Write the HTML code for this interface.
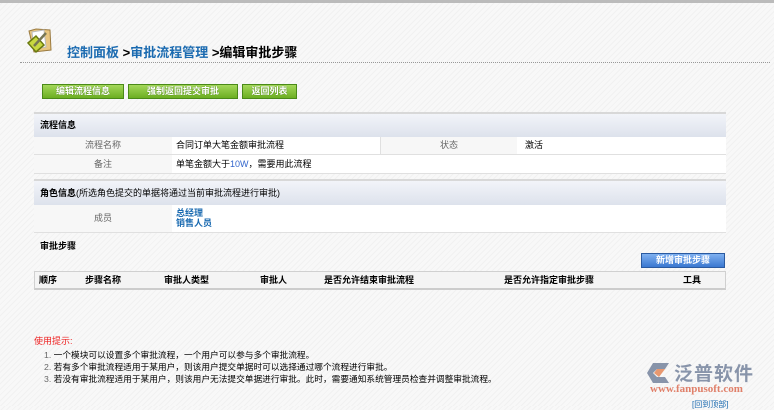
<!DOCTYPE html>
<html><head><meta charset="utf-8"><style>
*{margin:0;padding:0;box-sizing:border-box}
body{width:774px;height:406px;overflow:hidden;background:#f6f6f6 repeating-linear-gradient(135deg,#f8f8f8 0 3px,#f1f1f1 3px 4px);font-family:"Liberation Sans","Noto Sans CJK SC",sans-serif;font-size:9px;color:#000;position:relative}
.a{position:absolute}
.btn{position:absolute;top:84px;height:15px;background:linear-gradient(#a4d85a,#6cae22);border:1px solid #4a8a18;color:#fff;font-weight:bold;font-size:9px;text-align:center;line-height:13px;text-shadow:0 0 1px #3a6a10}
.hd{position:absolute;left:34px;width:692px;background:linear-gradient(#f2f4f9,#dde2ec);border-top:2px solid #d8d8d8;font-weight:bold;font-size:9px;padding-left:6px}
.row{position:absolute;left:34px;width:692px;border-bottom:1px solid #e0e0e0;background:#f7f7f7}
.c{position:absolute;top:0;height:100%}
</style></head><body>
<div class="a" style="left:0;top:0;width:774px;height:3px;background:#bbb"></div>
<svg class="a" style="left:24px;top:25px" width="30" height="30" viewBox="0 0 30 30">
<path d="M5 6 L12 4 L26 5 L27 25 L10 27 Z" fill="#e8c680" stroke="#9a7a40"/>
<path d="M8 7 L20 5 L22 22 L10 24Z" fill="#fff" stroke="#bbb"/>
<path d="M4 18 L12 11 L20 20 L12 27Z" fill="#c8d840" stroke="#6a7a10" stroke-width="1.5"/>
<path d="M10 21 L22 8" stroke="#775" stroke-width="2.5"/>
</svg>
<div class="a" style="left:67px;top:42px;font-size:13px;font-weight:bold;color:#1a6ab0;white-space:nowrap">控制面板 <span style="color:#000">&gt;</span>审批流程管理 <span style="color:#000">&gt;编辑审批步骤</span></div>
<div class="a" style="left:20px;top:62px;width:750px;border-top:1px dotted #999"></div>
<div class="btn" style="left:42px;width:82px">编辑流程信息</div>
<div class="btn" style="left:128px;width:110px">强制返回提交审批</div>
<div class="btn" style="left:242px;width:55px">返回列表</div>

<div class="hd" style="top:112px;height:25px;line-height:23px">流程信息</div>
<div class="row" style="top:137px;height:18px;line-height:17px">
<div class="c" style="left:0;width:138px;text-align:center;color:#666">流程名称</div>
<div class="c" style="left:138px;width:209px;background:#fff;padding-left:4px;border-right:1px solid #e0e0e0">合同订单大笔金额审批流程</div>
<div class="c" style="left:347px;width:136px;text-align:center;color:#666">状态</div>
<div class="c" style="left:483px;width:209px;background:#fff;padding-left:8px">激活</div>
</div>
<div class="row" style="top:155px;height:19px;line-height:18px">
<div class="c" style="left:0;width:138px;text-align:center;color:#666">备注</div>
<div class="c" style="left:138px;width:554px;background:#fff;padding-left:4px">单笔金额大于<span style="color:#36c">10W</span>，需要用此流程</div>
</div>
<div class="hd" style="top:179px;height:26px;line-height:24px">角色信息<span style="font-weight:normal">(所选角色提交的单据将通过当前审批流程进行审批)</span></div>
<div class="row" style="top:205px;height:28px">
<div class="c" style="left:0;width:138px;text-align:center;color:#666;line-height:27px">成员</div>
<div class="c" style="left:138px;width:554px;background:#fff;padding-left:4px;padding-top:3px;line-height:10px;color:#1a6ab0;font-weight:bold">总经理<br>销售人员</div>
</div>
<div class="a" style="left:40px;top:239px;font-weight:bold">审批步骤</div>
<div class="a" style="left:641px;top:253px;width:84px;height:15px;background:linear-gradient(#7fb0f0,#3a78d0);border:1px solid #2a5aa0;color:#fff;font-weight:bold;text-align:center;line-height:13px">新增审批步骤</div>
<div class="a" style="left:34px;top:271px;width:692px;height:19px;background:#f4f4f4;border:1px solid #d0d0d0;border-bottom:2px solid #ccc;font-weight:bold;line-height:16px">
<span class="a" style="left:4px">顺序</span><span class="a" style="left:50px">步骤名称</span><span class="a" style="left:129px">审批人类型</span><span class="a" style="left:225px">审批人</span><span class="a" style="left:289px">是否允许结束审批流程</span><span class="a" style="left:469px">是否允许指定审批步骤</span><span class="a" style="left:648px">工具</span></div>
<div class="a" style="left:34px;top:334px;color:#e22;font-size:9px">使用提示:</div>
<div class="a" style="left:44px;top:349px;line-height:12px;font-size:8.7px;white-space:nowrap"><span style="color:#666">1.</span> 一个模块可以设置多个审批流程，一个用户可以参与多个审批流程。<br><span style="color:#666">2.</span> 若有多个审批流程适用于某用户，则该用户提交单据时可以选择通过哪个流程进行审批。<br><span style="color:#666">3.</span> 若没有审批流程适用于某用户，则该用户无法提交单据进行审批。此时，需要通知系统管理员检查并调整审批流程。</div>
<svg class="a" style="left:645px;top:362px" width="26" height="22" viewBox="0 0 26 22"><path d="M2 11 L8 1 L24 1 L20 7 L12 7 L8 11 L12 15 L20 15 L24 21 L8 21Z" fill="#8894aa"/><path d="M12 7 L20 7 L14 15 L9 11Z" fill="#e89870"/></svg>
<div class="a" style="left:674px;top:359px;font-size:19px;font-weight:bold;color:#8894aa;letter-spacing:1px">泛普软件</div>
<div class="a" style="left:650px;top:383px;font-family:'Liberation Serif',serif;font-size:11px;color:#e0806a;font-weight:bold">www.fanpusoft.com</div>
<div class="a" style="left:692px;top:399px;font-size:8px;color:#1a6ab0">[回到顶部]</div>
</body></html>
